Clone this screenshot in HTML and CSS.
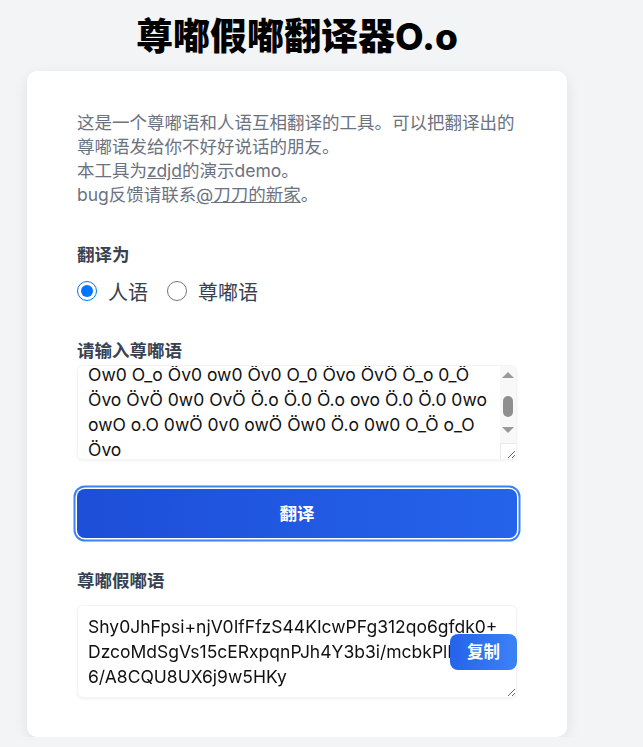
FILE: index.html
```html
<!DOCTYPE html>
<html lang="zh-CN">

<head>
    <meta charset="UTF-8">
    <meta name="viewport" content="width=device-width, initial-scale=1.0">
    <title>尊嘟假嘟翻译器O.o</title>
    <link rel="stylesheet" href="styles.css">
</head>

<body>
    <div class="page">
        <div class="main">
            <h1 class="title">尊嘟假嘟翻译器O.o</h1>

            <div class="card">
                <p class="intro">
                    这是一个尊嘟语和人语互相翻译的工具。可以把翻译出的尊嘟语发给你不好好说话的朋友。<br>
                    本工具为<a href="#">zdjd</a>的演示demo。<br>
                    bug反馈请联系<a href="#">@刀刀的新家</a>。
                </p>

                <div class="field-label mode-label">翻译为</div>
                <div class="mode-options">
                    <label class="option">
                        <input type="radio" name="mode" value="human" checked>
                        <span>人语</span>
                    </label>
                    <label class="option">
                        <input type="radio" name="mode" value="zdjd">
                        <span>尊嘟语</span>
                    </label>
                </div>

                <div class="field-label input-label">请输入尊嘟语</div>
                <div class="input-wrap">
                    <textarea class="box input-box" id="input" spellcheck="false">Ow0 O_o Öv0 ow0 Öv0 O_0 Övo ÖvÖ Ö_o 0_Ö Övo ÖvÖ 0w0 OvÖ Ö.o Ö.0 Ö.o ovo Ö.0 Ö.0 0wo owO o.O 0wÖ 0v0 owÖ Öw0 Ö.o 0w0 O_Ö o_O Övo</textarea>
                    <!-- scrollbar drawn by hand, the headless one is hidden -->
                    <div class="scrollbar" aria-hidden="true">
                        <span class="sb-up"></span>
                        <span class="sb-thumb"></span>
                        <span class="sb-down"></span>
                    </div>
                    <div class="sb-corner" aria-hidden="true"></div>
                </div>

                <button class="translate-btn" type="button">翻译</button>

                <div class="field-label output-label">尊嘟假嘟语</div>
                <div class="output-wrap">
                    <textarea class="box output-box" readonly spellcheck="false">Shy0JhFpsi+njV0IfFfzS44KIcwPFg312qo6gfdk0+DzcoMdSgVs15cERxpqnPJh4Y3b3i/mcbkPlHfwEd6/A8CQU8UX6j9w5HKy</textarea>
                    <button class="copy-btn" type="button">复制</button>
                </div>
            </div>
        </div>
    </div>

    <script>
        // lite nedscrollat, som i skärmbilden
        document.getElementById("input").scrollTop = 4;
    </script>
</body>

</html>
```

FILE: styles.css
```css
* {
    box-sizing: border-box;
}

body {
    margin: 0;
    background: #f3f4f6;
    font-family: Inter, "Noto Sans CJK SC", sans-serif;
    color: #111827;
}

.page {
    padding: 16px 0 0 27px;
}

.main {
    width: 540px;
}

.title {
    margin: 0 0 14px;
    font-size: 37px;
    line-height: 41px;
    font-weight: 800;
    text-align: center;
    color: #000;
}

.card {
    background: #fff;
    border-radius: 10px;
    padding: 40px 50px 39px;
    box-shadow: 0 4px 14px rgba(0, 0, 0, 0.08);
}

.intro {
    margin: 0;
    font-size: 17.5px;
    line-height: 24px;
    color: #6b7280;
}

.intro a {
    color: inherit;
    text-decoration: underline;
}

.field-label {
    font-size: 17.5px;
    line-height: 24px;
    font-weight: 600;
    color: #374151;
}

.mode-label {
    margin-top: 36px;
}

.mode-options {
    display: flex;
    gap: 19px;
    margin-top: 10px;
    height: 28px;
}

.option {
    display: flex;
    align-items: center;
    gap: 11px;
    font-size: 20px;
    color: #374151;
    cursor: pointer;
}

.option input {
    width: 20px;
    height: 20px;
    margin: 0;
}

.input-label {
    margin-top: 34px;
}

.box {
    display: block;
    width: 100%;
    border: 1px solid #f3f4f6;
    border-radius: 6px;
    box-shadow: 0 1px 3px rgba(0, 0, 0, 0.06);
    font-family: Inter, "Noto Sans CJK SC", sans-serif;
    font-size: 17.5px;
    line-height: 25px;
    color: #111;
    background: #fff;
    outline: none;
}

.input-wrap {
    position: relative;
    margin-top: 2px;
}

.input-box {
    height: 95px;
    padding: 0 26px 8px 10px;
    resize: vertical;
}

.scrollbar {
    position: absolute;
    top: 1px;
    right: 1px;
    bottom: 17px;
    width: 16px;
    background: #f8f8f8;
    display: flex;
    flex-direction: column;
    align-items: center;
    pointer-events: none;
}

.sb-up,
.sb-down {
    width: 0;
    height: 0;
    border-left: 6px solid transparent;
    border-right: 6px solid transparent;
}

.sb-up {
    margin-top: 6px;
    border-bottom: 6px solid #9a9a9a;
}

.sb-thumb {
    width: 10px;
    height: 21px;
    margin-top: 18px;
    border-radius: 5px;
    background: #8f8f8f;
}

.sb-down {
    margin-top: 10px;
    border-top: 6px solid #9a9a9a;
}

.sb-corner {
    position: absolute;
    right: 1px;
    bottom: 1px;
    width: 16px;
    height: 16px;
    border-top: 1px solid #e8e8e8;
    border-left: 1px solid #e8e8e8;
    pointer-events: none;
}

.translate-btn {
    display: block;
    width: 100%;
    margin-top: 29px;
    padding: 13px 0;
    border: none;
    border-radius: 8px;
    background: linear-gradient(to right, #1d4ed8, #2563eb);
    color: #fff;
    font-family: inherit;
    font-size: 17.5px;
    line-height: 23px;
    font-weight: 700;
    box-shadow: 0 0 0 1.5px #fff, 0 0 0 3.5px #3b82f6;
    cursor: pointer;
}

.output-label {
    margin-top: 31px;
}

.output-wrap {
    position: relative;
    margin-top: 12px;
}

.output-box {
    height: 93px;
    padding: 8px 10px;
    resize: vertical;
    word-break: break-all;
}

.copy-btn {
    position: absolute;
    right: 0;
    top: 50%;
    transform: translateY(-50%);
    padding: 7px 17px;
    border: none;
    border-radius: 8px;
    background: linear-gradient(to right, #2563eb, #3b82f6);
    color: #fff;
    font-family: inherit;
    font-size: 16.5px;
    line-height: 22px;
    font-weight: 700;
    cursor: pointer;
}
```
